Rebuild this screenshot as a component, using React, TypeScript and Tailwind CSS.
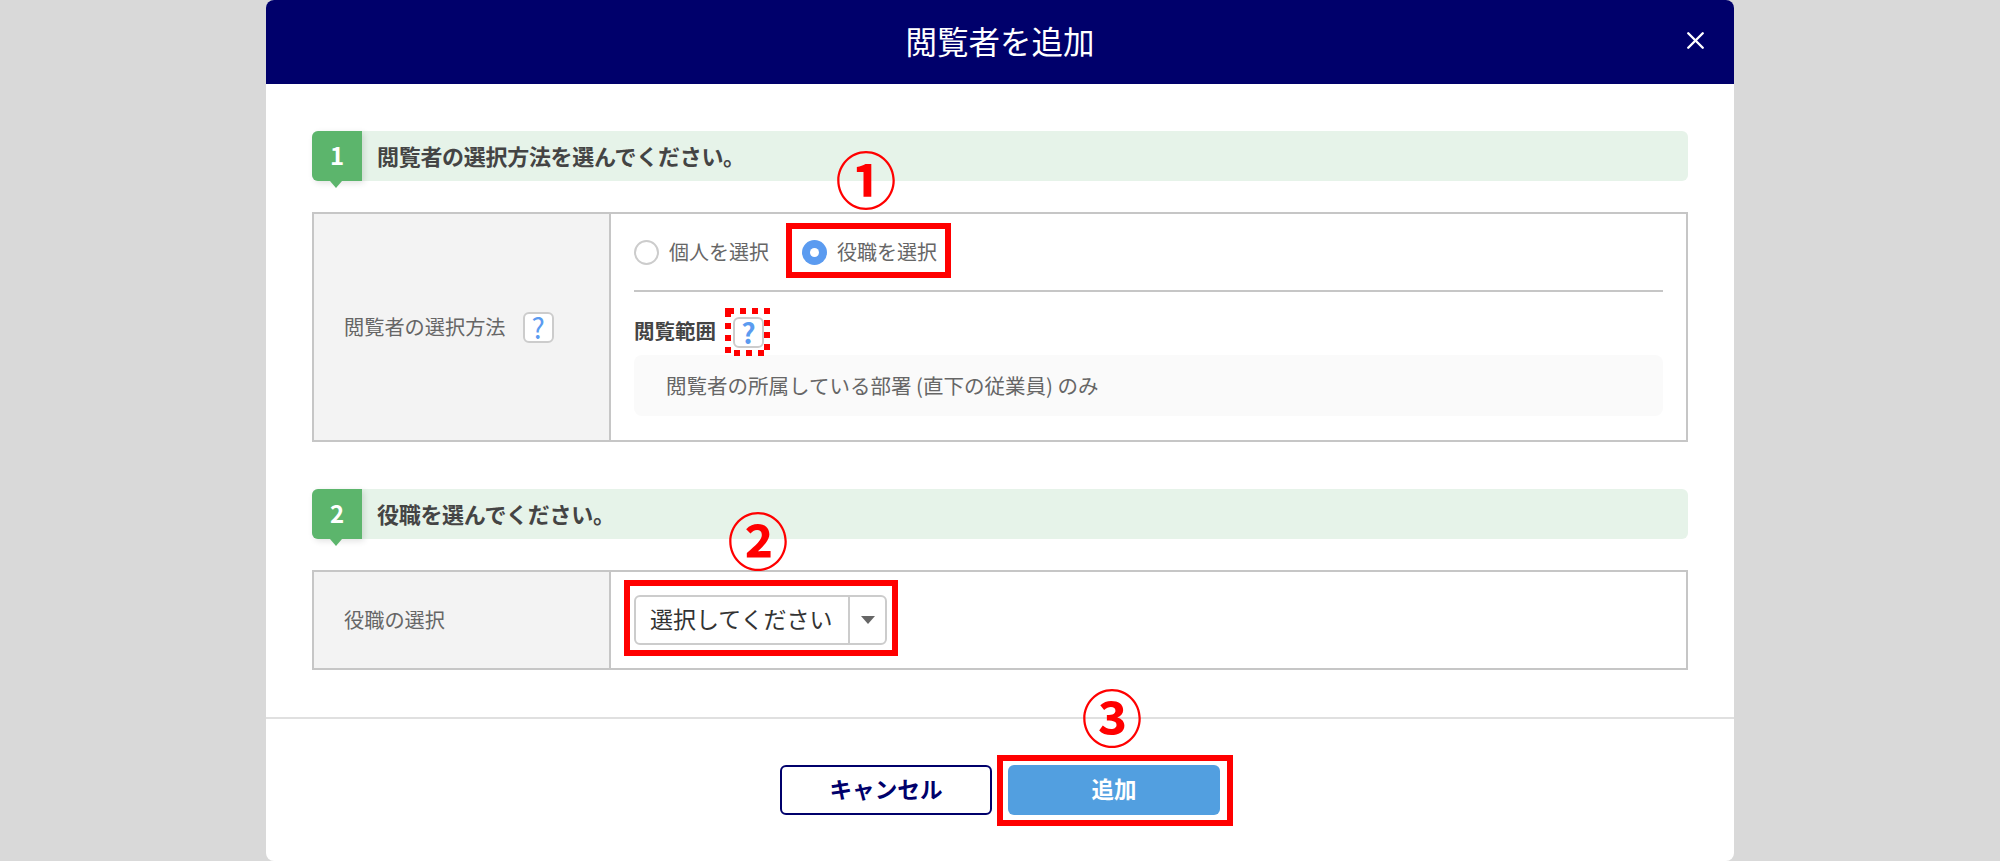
import { X } from 'lucide-react'

const font = { fontFamily: '"Noto Sans CJK JP", "Liberation Sans", sans-serif' }

// 見出し（番号つき）
const SectionHead = ({ num, title }: { num: string; title: string }) => (
  <div className="relative flex h-[50px] items-center rounded-md bg-[#e6f3e9]">
    <div className="relative flex h-full w-[50px] items-center justify-center rounded-l-md bg-[#5cb56c] pb-[3px] text-[24px] font-bold text-white shadow-[2px_2px_6px_rgba(0,0,0,0.12)]">
      {num}
      <span className="absolute left-[18px] top-full h-0 w-0 border-x-[6px] border-t-[7px] border-x-transparent border-t-[#5cb56c]" />
    </div>
    <span className="ml-[15px] pb-[2px] text-[22px] font-bold tracking-[-0.3px] text-[#444]">{title}</span>
  </div>
)

const HelpIcon = () => (
  <span className="flex h-[31px] w-[31px] items-center justify-center rounded-[6px] border-2 border-[#ccc] bg-white text-[28px] leading-none text-[#5b9bf0]">
    ?
  </span>
)

const Radio = ({ label, checked }: { label: string; checked?: boolean }) => (
  <label className="flex items-center gap-[10px] text-[20px] text-[#666]">
    {checked ? (
      <span className="flex h-[25px] w-[25px] items-center justify-center rounded-full bg-[#5b9bf0]">
        <span className="h-[9px] w-[9px] rounded-full bg-white" />
      </span>
    ) : (
      <span className="h-[25px] w-[25px] rounded-full border-2 border-[#ccc] bg-white" />
    )}
    {label}
  </label>
)

// 説明用の赤い注釈
const RedBox = ({ className }: { className: string }) => (
  <div className={`absolute border-[6px] border-[#ff0000] ${className}`} />
)

const Mark = ({ className, children }: { className: string; children: string }) => (
  <div className={`absolute flex h-[68px] w-[68px] items-center justify-center text-[61px] leading-none font-bold text-[#ff0000] ${className}`}>
    {children}
  </div>
)

export default function App() {
  return (
    <div className="h-[861px] overflow-hidden bg-[#d9d9d9]" style={font}>
      <div className="relative mx-auto flex h-[861px] w-[1468px] flex-col overflow-hidden rounded-lg bg-white">
        <header className="relative flex h-[84px] items-center justify-center bg-[#00006b]">
          <h1 className="pb-[2px] text-[31.5px] font-normal text-white">閲覧者を追加</h1>
          <X className="absolute right-[24px] top-[26px] h-[29px] w-[29px] text-white" strokeWidth={2} />
        </header>

        <main className="flex-1 px-[46px] pt-[47px]">
          <SectionHead num="1" title="閲覧者の選択方法を選んでください。" />
          <div className="mt-[31px] flex h-[230px] border-2 border-[#c6c6c6]">
            <div className="flex w-[297px] items-center gap-[17px] border-r-2 border-[#c6c6c6] bg-[#f3f3f3] pl-[30px] text-[20.2px] text-[#666]">
              閲覧者の選択方法
              <HelpIcon />
            </div>
            <div className="flex-1 px-[23px]">
              <div className="flex h-[78px] items-center gap-[33px] border-b-2 border-[#c6c6c6]">
                <Radio label="個人を選択" />
                <Radio label="役職を選択" checked />
              </div>
              <div className="mt-[24px] flex h-[32px] items-center gap-[17px] text-[20.5px] font-bold text-[#444]">
                <span className="relative -top-[2px]">閲覧範囲</span>
                <HelpIcon />
              </div>
              <div className="mt-[7px] flex h-[61px] items-center rounded-lg bg-[#fafafa] pl-[32px] text-[20.5px] text-[#666]">
                閲覧者の所属している部署 (直下の従業員) のみ
              </div>
            </div>
          </div>

          <div className="mt-[47px]">
            <SectionHead num="2" title="役職を選んでください。" />
          </div>
          <div className="mt-[31px] flex h-[100px] border-2 border-[#c6c6c6]">
            <div className="flex w-[297px] items-center border-r-2 border-[#c6c6c6] bg-[#f3f3f3] pl-[30px] text-[20.2px] text-[#666]">
              役職の選択
            </div>
            <div className="flex flex-1 items-center px-[23px]">
              <div className="flex h-[50px] w-[253px] items-center rounded-md border-2 border-[#ccc] bg-white">
                <span className="w-[214px] whitespace-nowrap border-r-2 border-[#ccc] pl-[14px] text-[23px] leading-[46px] text-[#333]">
                  <span className="relative -top-[2px]">選択してください</span>
                </span>
                <span className="flex-1">
                  <svg viewBox="0 0 14 8" className="mx-auto h-[8px] w-[14px]">
                    <path d="M0 0h14L7 8z" fill="#666" />
                  </svg>
                </span>
              </div>
            </div>
          </div>
        </main>

        <footer className="flex h-[144px] justify-center gap-[16px] border-t-2 border-[#e0e0e0] pt-[46px]">
          <button className="h-[50px] w-[212px] rounded-md border-2 border-[#00006b] bg-white pb-[2px] text-[22.6px] font-bold text-[#00006b]">
            キャンセル
          </button>
          <button className="h-[50px] w-[212px] rounded-md bg-[#529fe0] pb-[2px] text-[22.5px] font-bold text-white">
            追加
          </button>
        </footer>

        {/* 注釈 */}
        <RedBox className="left-[520px] top-[223px] h-[55px] w-[165px]" />
        <RedBox className="left-[358px] top-[580px] h-[76px] w-[274px]" />
        <RedBox className="left-[731px] top-[755px] h-[71px] w-[236px]" />
        <Mark className="left-[566px] top-[143px]">①</Mark>
        <Mark className="left-[458px] top-[504px]">②</Mark>
        <Mark className="left-[812px] top-[681px]">③</Mark>
        <svg className="absolute left-[459px] top-[308px] h-[48px] w-[45px]" viewBox="0 0 45 48" fill="none">
          <rect x="3" y="3" width="39" height="42" stroke="#ff0000" strokeWidth="6" strokeDasharray="6 6" />
        </svg>
      </div>
    </div>
  )
}
